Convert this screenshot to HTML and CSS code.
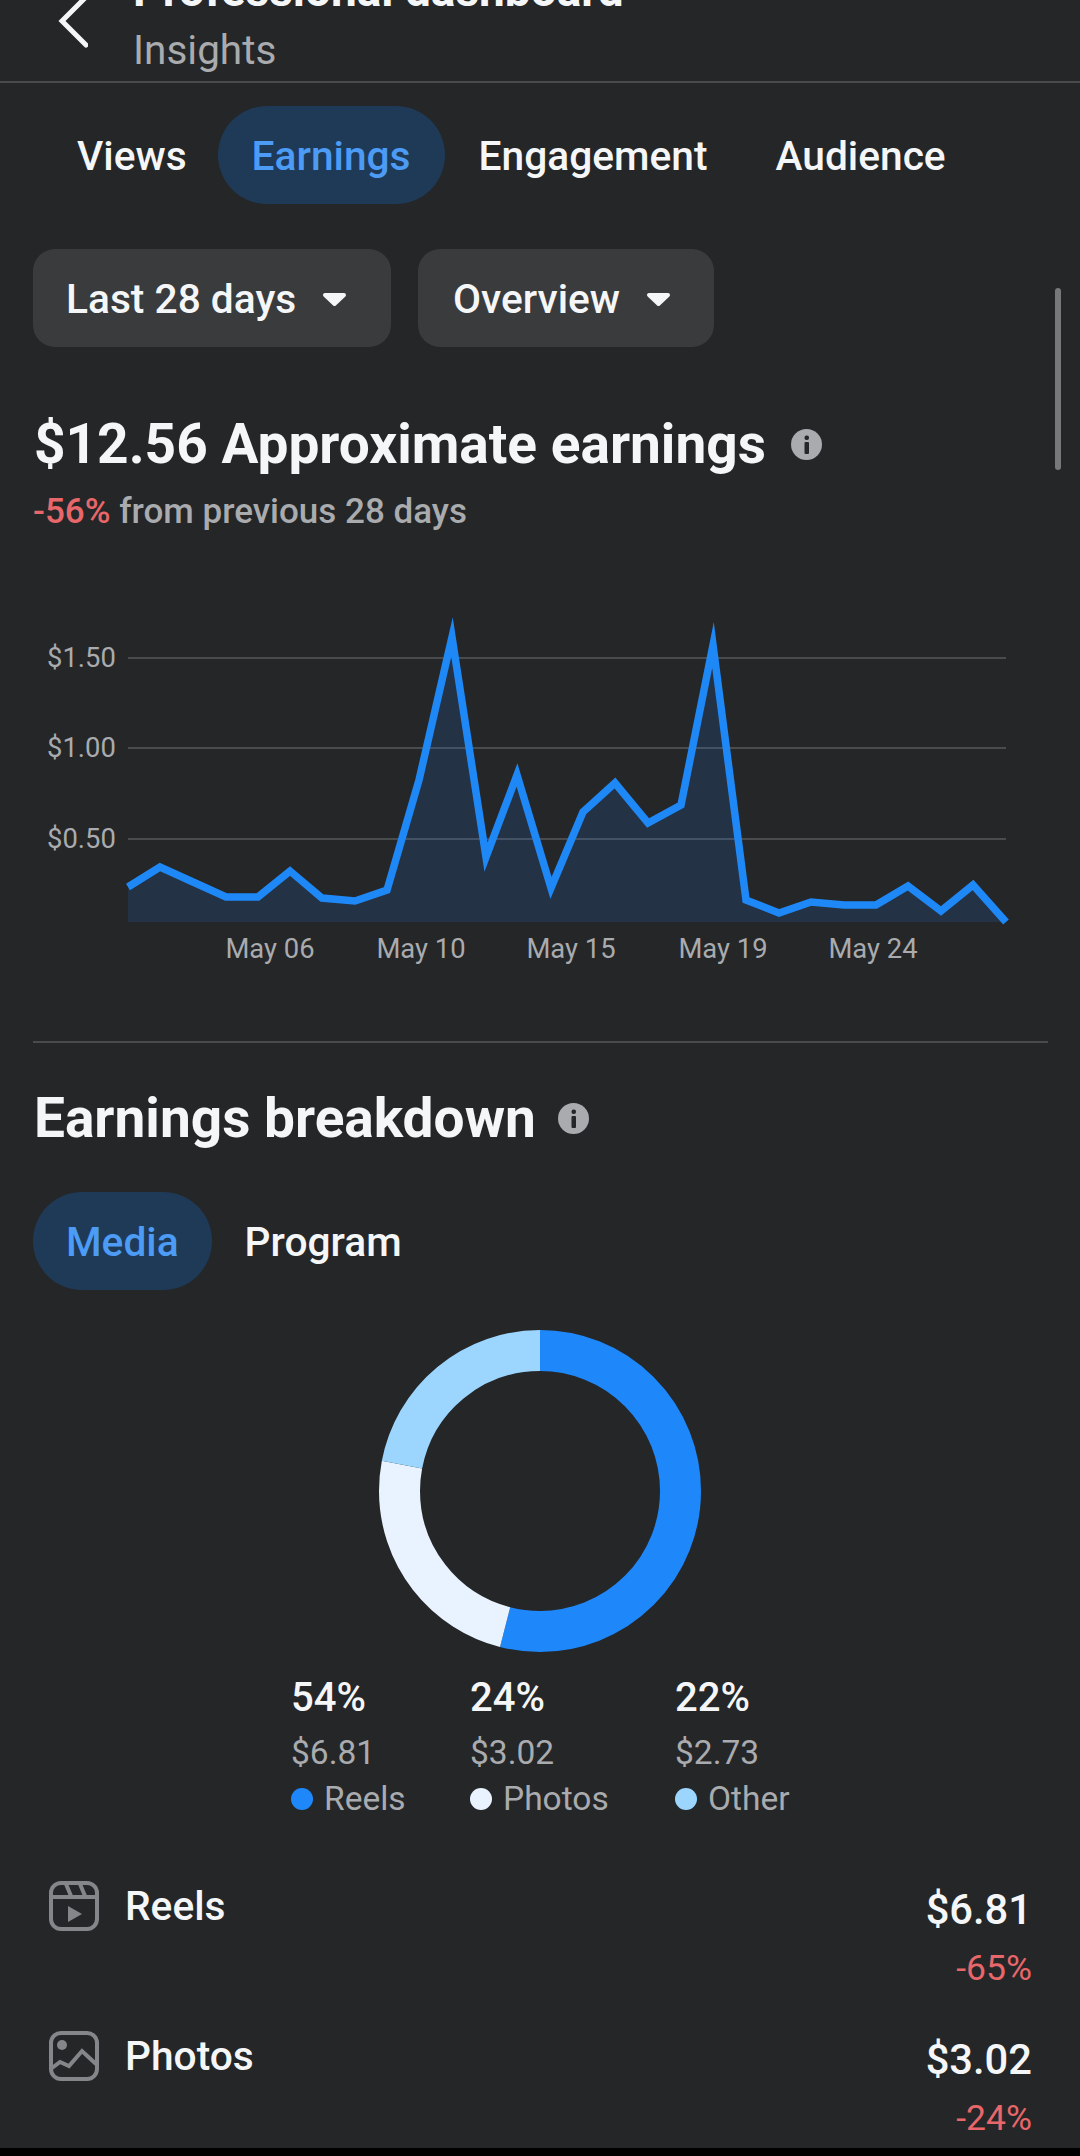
FILE: index.html
```html
<!DOCTYPE html>
<html lang="en">
<head>
    <meta charset="UTF-8">
    <meta name="viewport" content="width=device-width, initial-scale=1.0">
    <title>Insights</title>

    <link rel="stylesheet" href="styles.css">
</head>

<body>
    <div id="page">
        <div class="header">
            <svg class="backIcon" width="30" height="50" viewBox="0 0 30 50">
                <path d="M28 -3 L4 21 L28 45" />
            </svg>
            <div class="headerText">
                <div class="headerTitle">Professional dashboard</div>
                <div class="headerSub">Insights</div>
            </div>
        </div>

        <div class="tabs mainTabs">
            <div class="tab tabViews">Views</div>
            <div class="tab active">Earnings</div>
            <div class="tab">Engagement</div>
            <div class="tab">Audience</div>
        </div>

        <div class="filters">
            <div class="filter filterDays">Last 28 days
                <svg class="caret" width="25" height="15" viewBox="0 0 25 15"><path d="M3 3 H22 L12.5 12 Z" /></svg>
            </div>
            <div class="filter filterView">Overview
                <svg class="caret" width="25" height="15" viewBox="0 0 25 15"><path d="M3 3 H22 L12.5 12 Z" /></svg>
            </div>
        </div>

        <div class="scrollbar"></div>

        <div class="heading summary">
            $12.56 Approximate earnings
            <svg class="infoIcon" width="31" height="31" viewBox="0 0 31 31">
                <circle class="infoBg" cx="15.5" cy="15.5" r="15.5" />
                <rect class="infoMark" x="13.5" y="6.5" width="4.5" height="4.5" rx="2" />
                <rect class="infoMark" x="13.5" y="13" width="4.5" height="12" rx="1" />
            </svg>
        </div>
        <div class="compare"><span class="negative">-56%</span> from previous 28 days</div>

        <!-- viewBox uses page coordinates so the points read straight off the screen -->
        <svg class="chart" width="1080" height="400" viewBox="0 600 1080 400">
            <line class="gridLine" x1="128" y1="658" x2="1006" y2="658" />
            <line class="gridLine" x1="128" y1="748" x2="1006" y2="748" />
            <line class="gridLine" x1="128" y1="839" x2="1006" y2="839" />
            <polygon class="chartArea" points="128,922 128,887 160,867 193,882 226,897 258,897 290,871 322,898 355,901 387,890 419,780 452,637 486,857 517,775 551,888 583,812 615,783 648,823 681,805 713,645 746,900 779,913 811,902 844,905 876,905 908,886 941,911 973,885 1006,922" />
            <polyline class="chartLine" points="128,887 160,867 193,882 226,897 258,897 290,871 322,898 355,901 387,890 419,780 452,637 486,857 517,775 551,888 583,812 615,783 648,823 681,805 713,645 746,900 779,913 811,902 844,905 876,905 908,886 941,911 973,885 1006,922" />
            <text class="chartLabel" x="47" y="667">$1.50</text>
            <text class="chartLabel" x="47" y="757">$1.00</text>
            <text class="chartLabel" x="47" y="848">$0.50</text>
            <text class="chartLabel tick" x="270" y="958">May 06</text>
            <text class="chartLabel tick" x="421" y="958">May 10</text>
            <text class="chartLabel tick" x="571" y="958">May 15</text>
            <text class="chartLabel tick" x="723" y="958">May 19</text>
            <text class="chartLabel tick" x="873" y="958">May 24</text>
        </svg>

        <div class="divider"></div>

        <div class="heading breakdown">
            Earnings breakdown
            <svg class="infoIcon" width="31" height="31" viewBox="0 0 31 31">
                <circle class="infoBg" cx="15.5" cy="15.5" r="15.5" />
                <rect class="infoMark" x="13.5" y="6.5" width="4.5" height="4.5" rx="2" />
                <rect class="infoMark" x="13.5" y="13" width="4.5" height="12" rx="1" />
            </svg>
        </div>

        <div class="tabs subTabs">
            <div class="tab active">Media</div>
            <div class="tab">Program</div>
        </div>

        <svg class="donut" width="324" height="324" viewBox="0 0 324 324">
            <circle class="slice sliceReels" cx="162" cy="162" r="140.5" pathLength="100" stroke-dasharray="54 46" />
            <circle class="slice slicePhotos" cx="162" cy="162" r="140.5" pathLength="100" stroke-dasharray="24 76" stroke-dashoffset="-54" />
            <circle class="slice sliceOther" cx="162" cy="162" r="140.5" pathLength="100" stroke-dasharray="22 78" stroke-dashoffset="-78" />
        </svg>

        <div class="legend">
            <div class="legendCol colReels">
                <div class="legendPct">54%</div>
                <div class="legendAmount">$6.81</div>
                <div class="legendName"><span class="dot dotReels"></span>Reels</div>
            </div>
            <div class="legendCol colPhotos">
                <div class="legendPct">24%</div>
                <div class="legendAmount">$3.02</div>
                <div class="legendName"><span class="dot dotPhotos"></span>Photos</div>
            </div>
            <div class="legendCol">
                <div class="legendPct">22%</div>
                <div class="legendAmount">$2.73</div>
                <div class="legendName"><span class="dot dotOther"></span>Other</div>
            </div>
        </div>

        <div class="rows">
            <div class="row">
                <svg class="rowIcon" width="50" height="50" viewBox="0 0 50 50">
                    <rect x="2" y="2" width="46" height="46" rx="10" />
                    <path d="M2 16 H48 M17 3 L22 15 M31 3 L36 15" />
                    <polygon class="playMark" points="19,25 33,33 19,41" />
                </svg>
                <div class="rowName">Reels</div>
                <div class="rowRight">
                    <div class="rowAmount">$6.81</div>
                    <div class="rowChange negative">-65%</div>
                </div>
            </div>
            <div class="row">
                <svg class="rowIcon" width="50" height="50" viewBox="0 0 50 50">
                    <rect x="2" y="2" width="46" height="46" rx="10" />
                    <path d="M3 37 L11 31 L20 35 L33 20 L47 33" />
                    <circle class="playMark" cx="13" cy="14" r="5" />
                </svg>
                <div class="rowName">Photos</div>
                <div class="rowRight">
                    <div class="rowAmount">$3.02</div>
                    <div class="rowChange negative">-24%</div>
                </div>
            </div>
        </div>

        <div class="navEdge"></div>
    </div>
</body>

</html>
```

FILE: styles.css
```css
body {
    margin: 0;
    background-color: #252628;
}

#page {
    position: relative;
    width: 1080px;
    height: 2156px;
    overflow: hidden;
    background-color: #252628;
    color: #f5f6f7;
    font-family: Roboto, "Liberation Sans", sans-serif;
}

/* top bar, the title is cut off by the screen edge */
.header {
    display: flex;
    height: 81px;
    border-bottom: 2px solid #4a4b4d;
    overflow: hidden;
}

.backIcon {
    margin-left: 58px;
    flex: none;
}

.backIcon path {
    fill: none;
    stroke: #f5f6f7;
    stroke-width: 5;
    stroke-linecap: round;
}

.headerText {
    margin-left: 45px;
    margin-top: -35px;
}

.headerTitle {
    font-size: 46px;
    font-weight: 700;
    line-height: 50px;
}

.headerSub {
    font-size: 40.5px;
    line-height: 48px;
    margin-top: 11px;
    color: #a9abae;
}

.tabs {
    display: flex;
}

.mainTabs {
    margin: 23px 0 0 43px;
}

.subTabs {
    margin: 44px 0 0 33px;
}

.tab {
    height: 98px;
    line-height: 101px;
    padding: 0 33px;
    border-radius: 49px;
    font-size: 40.7px;
    font-weight: 500;
}

.mainTabs .tab {
    padding: 0 34px;
}

.mainTabs .tabViews {
    padding-right: 31px;
}

.tab.active {
    color: #4c9bf5;
    background-color: #1f3a57;
}

.filters {
    display: flex;
    gap: 27px;
    margin: 45px 0 0 33px;
}

.filter {
    display: flex;
    align-items: center;
    height: 98px;
    padding: 2px 0 0 33px;
    box-sizing: border-box;
    border-radius: 22px;
    background-color: #3a3b3d;
    font-size: 40.7px;
    font-weight: 500;
}

.filterDays {
    width: 358px;
}

.filterView {
    width: 296px;
    padding-left: 35px;
}

.caret {
    margin-left: 26px;
}

.caret path {
    fill: #f5f6f7;
    stroke: #f5f6f7;
    stroke-width: 4;
    stroke-linejoin: round;
}

.scrollbar {
    position: absolute;
    left: 1055px;
    top: 288px;
    width: 6px;
    height: 182px;
    border-radius: 3px;
    background-color: #77787a;
}

.heading {
    display: flex;
    align-items: center;
    margin-left: 34px;
    height: 60px;
    font-size: 55px;
    font-weight: 700;
    white-space: nowrap;
}

.summary {
    margin-top: 67px;
}

.breakdown {
    margin-top: 45px;
}

.infoIcon {
    margin-left: 25px;
    flex: none;
}

.breakdown .infoIcon {
    margin-left: 22px;
}

.infoBg {
    fill: #a9abae;
}

.infoMark {
    fill: #252628;
}

.compare {
    margin: 18px 0 0 33px;
    font-size: 35px;
    line-height: 40px;
    font-weight: 500;
    color: #a9abae;
}

.negative {
    color: #e8676a;
}

.chart {
    display: block;
    margin-top: 68px;
}

.gridLine {
    stroke: #4a4b4d;
    stroke-width: 2;
}

.chartArea {
    fill: #1d81f5;
    fill-opacity: 0.14;
}

.chartLine {
    fill: none;
    stroke: #1e88f7;
    stroke-width: 7.5;
    stroke-miterlimit: 12;
}

.chartLabel {
    font-size: 27.4px;
    fill: #a9abae;
}

.tick {
    text-anchor: middle;
}

.divider {
    height: 2px;
    margin: 41px 32px 0 33px;
    background-color: #4a4b4d;
}

.donut {
    display: block;
    margin: 39px auto 0;
}

.slice {
    fill: none;
    stroke-width: 41;
    transform: rotate(-90deg);
    transform-origin: 162px 162px;
}

.sliceReels {
    stroke: #1e88fb;
}

.slicePhotos {
    stroke: #e9f3ff;
}

.sliceOther {
    stroke: #9cd6ff;
}

.legend {
    display: flex;
    margin: 23px 0 0 291px;
}

.colReels {
    width: 179px;
}

.colPhotos {
    width: 205px;
}

.legendPct {
    font-size: 40px;
    font-weight: 500;
    line-height: 44px;
}

.legendAmount {
    margin-top: 13px;
    font-size: 33.5px;
    line-height: 40px;
    color: #a9abae;
}

.legendName {
    display: flex;
    align-items: center;
    margin-top: 6px;
    font-size: 33.5px;
    line-height: 40px;
    color: #a9abae;
}

.dot {
    width: 22px;
    height: 22px;
    margin-right: 11px;
    border-radius: 50%;
}

.dotReels {
    background-color: #1e88fb;
}

.dotPhotos {
    background-color: #e9f3ff;
}

.dotOther {
    background-color: #9cd6ff;
}

.rows {
    margin: 62px 48px 0 49px;
}

.row {
    display: flex;
    height: 150px;
}

.rowIcon {
    flex: none;
}

.rowIcon rect,
.rowIcon path {
    fill: none;
    stroke: #85868a;
    stroke-width: 4;
}

.playMark {
    fill: #85868a;
}

.rowName {
    margin-left: 26px;
    font-size: 40.7px;
    font-weight: 500;
    line-height: 50px;
}

.rowRight {
    margin-left: auto;
    padding-top: 5px;
    text-align: right;
}

.rowAmount {
    font-size: 41.7px;
    font-weight: 500;
    line-height: 48px;
}

.rowChange {
    margin-top: 14px;
    font-size: 35.5px;
    line-height: 40px;
}

.navEdge {
    position: absolute;
    left: 0;
    right: 0;
    bottom: 0;
    height: 8px;
    background-color: #000;
}
```
